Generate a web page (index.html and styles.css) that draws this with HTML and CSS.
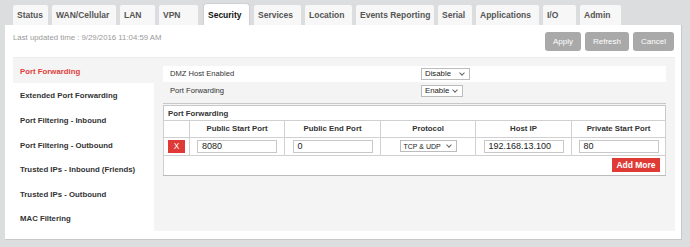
FILE: index.html
```html
<!DOCTYPE html>
<html>
<head>
<meta charset="utf-8">
<link rel="stylesheet" href="styles.css">
</head>
<body>
<div class="page">
  <div class="tabs">
    <div class="tab t35">Status</div>
    <div class="tab t64">WAN/Cellular</div>
    <div class="tab t35">LAN</div>
    <div class="tab t39">VPN</div>
    <div class="tab active t47">Security</div>
    <div class="tab t47">Services</div>
    <div class="tab t47">Location</div>
    <div class="tab t78">Events Reporting</div>
    <div class="tab t34">Serial</div>
    <div class="tab t63">Applications</div>
    <div class="tab t33">I/O</div>
    <div class="tab t41">Admin</div>
  </div>
  <div class="panel">
    <div class="topbar">
      <div class="updated">Last updated time : 9/29/2016 11:04:59 AM</div>
      <div class="actions">
        <button class="btn b-apply">Apply</button>
        <button class="btn b-refresh">Refresh</button>
        <button class="btn b-cancel">Cancel</button>
      </div>
    </div>
    <div class="body">
      <div class="nav">
        <div class="nav-item active">Port Forwarding</div>
        <div class="nav-item">Extended Port Forwarding</div>
        <div class="nav-item">Port Filtering - Inbound</div>
        <div class="nav-item">Port Filtering - Outbound</div>
        <div class="nav-item">Trusted IPs - Inbound (Friends)</div>
        <div class="nav-item">Trusted IPs - Outbound</div>
        <div class="nav-item">MAC Filtering</div>
      </div>
      <div class="content">
        <div class="setting white">
          <span class="label">DMZ Host Enabled</span>
          <span class="select w49">Disable<span class="chev"></span></span>
        </div>
        <div class="setting second">
          <span class="label">Port Forwarding</span>
          <span class="select w42">Enable<span class="chev"></span></span>
        </div>
        <div class="box">
          <div class="box-title">Port Forwarding</div>
          <table class="grid">
            <tr class="head">
              <th class="c0"></th>
              <th class="c1">Public Start Port</th>
              <th class="c2">Public End Port</th>
              <th class="c3">Protocol</th>
              <th class="c4">Host IP</th>
              <th class="c5">Private Start Port</th>
            </tr>
            <tr class="row">
              <td class="c0"><span class="del">X</span></td>
              <td><span class="input">8080</span></td>
              <td><span class="input">0</span></td>
              <td><span class="select proto">TCP &amp; UDP<span class="chev"></span></span></td>
              <td><span class="input">192.168.13.100</span></td>
              <td><span class="input">80</span></td>
            </tr>
            <tr class="foot">
              <td colspan="6"><span class="add">Add More</span></td>
            </tr>
          </table>
        </div>
      </div>
    </div>
  </div>
</div>
</body>
</html>
```
FILE: styles.css
```css
* { box-sizing: border-box; }
body {
  margin: 0;
  background: #dcdddf;
  font-family: "Liberation Sans", Arial, sans-serif;
  color: #333;
}
.page { padding: 0 0 0 5px; width: 690px; }
.tabs {
  display: flex;
  gap: 4px;
  padding: 5px 0 0 8px;
  height: 25px;
  align-items: flex-end;
}
.tab {
  height: 20px;
  padding: 0 0 0 4px;
  background: #f7f7f7;
  font-size: 8.5px;
  font-weight: bold;
  color: #555;
  line-height: 20px;
  white-space: nowrap;
  border-radius: 2px 2px 0 0;
}
.t33 { width: 33px; }
.t34 { width: 34px; }
.t35 { width: 35px; }
.t39 { width: 39px; }
.t41 { width: 41px; }
.t47 { width: 47px; }
.t63 { width: 63px; }
.t64 { width: 64px; }
.t78 { width: 78px; }
.tab.active {
  height: 22px;
  line-height: 22px;
  background: #fff;
  color: #111;
  border: 1px solid #d0d0d0;
  border-bottom: none;
  border-radius: 4px 4px 0 0;
  padding-left: 4px;
  margin-left: 1px;
}
.panel {
  width: 677px;
  height: 215px;
  background: #fff;
  border-right: 1px solid #c8c8c8;
  border-bottom: 1px solid #c8c8c8;
  padding: 0 6px 0 8px;
  display: flex;
  flex-direction: column;
}
.topbar {
  display: flex;
  justify-content: space-between;
  height: 33px;
  border-bottom: 1px solid #ececec;
}
.updated {
  font-size: 7.8px;
  color: #9a9a9a;
  padding-top: 8px;
}
.actions { display: flex; gap: 4px; padding-top: 7px; padding-right: 1px; }
.btn {
  height: 19px;
  border: none;
  border-radius: 3px;
  background: #a9a9a9;
  color: #fff;
  font-family: inherit;
  font-size: 8px;
  padding: 0;
}
.b-apply { width: 36px; }
.b-refresh { width: 44px; }
.b-cancel { width: 41px; }
.body {
  display: flex;
  flex: 1;
  margin-bottom: 8px;
}
.nav {
  width: 141px;
  display: flex;
  flex-direction: column;
  padding-top: 1px;
}
.nav-item {
  height: 24.6px;
  line-height: 25px;
  padding-left: 7px;
  font-size: 7.8px;
  font-weight: bold;
  color: #333;
}
.nav-item.active {
  background: #f4f4f4;
  color: #e0403a;
  margin-top: -1px;
  height: 25.6px;
  line-height: 27px;
}
.content {
  flex: 1;
  background: #f4f4f4;
  padding: 8px 9px 0 9px;
}
.setting {
  height: 16px;
  display: flex;
  align-items: center;
  justify-content: space-between;
  padding-left: 7px;
  padding-right: 196px;
  font-size: 7.6px;
  color: #333;
  margin-bottom: 1px;
}
.setting.white { background: #fff; }
.setting.second { padding-right: 203px; }
.select {
  display: inline-flex;
  align-items: center;
  justify-content: space-between;
  height: 12px;
  border: 1px solid #bcbcbc;
  background: #fff;
  font-size: 7.8px;
  padding: 0 3px;
  color: #222;
}
.w49 { width: 49px; }
.w42 { width: 42px; }
.chev {
  width: 4px;
  height: 4px;
  border-right: 1.2px solid #666;
  border-bottom: 1.2px solid #666;
  transform: rotate(45deg);
  margin-top: -2px;
  margin-right: 2px;
}
.box {
  margin-top: 4px;
  border-top: 1px solid #c8c8c8;
  padding-top: 1px;
}
.box-title {
  background: #fff;
  border: 1px solid #c8c8c8;
  border-bottom: none;
  height: 15px;
  line-height: 15px;
  font-size: 7.8px;
  font-weight: bold;
  padding-left: 4px;
}
.grid {
  width: 503px;
  border-collapse: collapse;
  background: #fff;
  font-size: 7.8px;
}
.grid th, .grid td {
  border: 1px solid #d0d0d0;
  padding: 0;
}
.grid th { height: 17px; font-weight: bold; color: #333; }
.c0 { width: 26px; }
.c1 { width: 95px; }
.c2 { width: 96px; }
.c3 { width: 95px; }
.c4 { width: 96px; }
.row td { height: 18px; text-align: center; }
.del {
  display: inline-block;
  width: 17px;
  height: 13px;
  background: #e03a36;
  color: #fff;
  font-size: 8.5px;
  line-height: 13px;
  text-align: center;
  vertical-align: middle;
}
.input {
  display: inline-block;
  width: 80px;
  height: 13px;
  border: 1px solid #c8c8c8;
  text-align: left;
  padding-left: 4px;
  font-size: 9px;
  line-height: 11px;
  color: #222;
  vertical-align: middle;
}
.proto { width: 57px; font-size: 7px; height: 12px; vertical-align: middle; }
.foot td {
  height: 20px;
  text-align: right;
  padding-right: 5px;
  border-bottom: 1px solid #bbb;
}
.add {
  display: inline-block;
  width: 48px;
  height: 14px;
  line-height: 14px;
  text-align: center;
  background: #e03a36;
  color: #fff;
  font-weight: bold;
  font-size: 8.5px;
  vertical-align: middle;
}
```
